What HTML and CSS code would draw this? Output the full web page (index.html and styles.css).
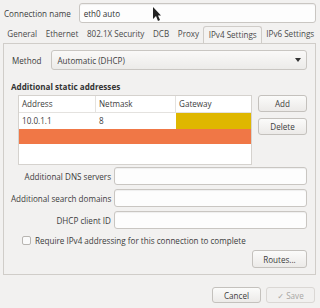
FILE: index.html
```html
<!DOCTYPE html>
<html>
<head>
<meta charset="utf-8">
<link rel="stylesheet" href="styles.css">
</head>
<body>
<div class="win">
  <div class="toprow">
    <span class="lbl">Connection name</span>
    <div class="entry name">eth0 auto<span class="cursor"><svg width="9" height="14" viewBox="0 0 9 14"><path d="M1 0 L1 12 L4 9 L6 14 L8 13 L6 8.5 L9 8.5 Z" fill="#222"/></svg></span></div>
  </div>
  <div class="tabs">
    <span class="tab">General</span>
    <span class="tab">Ethernet</span>
    <span class="tab">802.1X Security</span>
    <span class="tab">DCB</span>
    <span class="tab">Proxy</span>
    <span class="tab active">IPv4 Settings</span>
    <span class="tab">IPv6 Settings</span>
  </div>
  <div class="panel">
    <div class="method">
      <span class="lbl">Method</span>
      <div class="combo"><span>Automatic (DHCP)</span><span class="arrow"></span></div>
    </div>
    <div class="section">Additional static addresses</div>
    <div class="addr">
      <div class="table">
        <div class="trow head"><div class="c c1">Address</div><div class="c c2">Netmask</div><div class="c c3">Gateway</div></div>
        <div class="trow"><div class="c c1">10.0.1.1</div><div class="c c2">8</div><div class="c c3 yellow"></div></div>
        <div class="trow orange"></div>
      </div>
      <div class="sidebtns">
        <div class="btn">Add</div>
        <div class="btn">Delete</div>
      </div>
    </div>
    <div class="form">
      <span class="flbl">Additional DNS servers</span><div class="entry"></div>
      <span class="flbl">Additional search domains</span><div class="entry"></div>
      <span class="flbl">DHCP client ID</span><div class="entry"></div>
    </div>
    <div class="check"><span class="box"></span><span>Require IPv4 addressing for this connection to complete</span></div>
    <div class="routes"><div class="btn wide">Routes...</div></div>
  </div>
  <div class="bottom">
    <div class="btn cancel">Cancel</div>
    <div class="btn save">✓ Save</div>
  </div>
</div>
</body>
</html>
```
FILE: styles.css
```css
html, body {
  margin: 0;
  padding: 0;
}
body {
  background: #f2f1f0;
  font-family: "Open Sans", "DejaVu Sans", sans-serif;
  font-size: 8.1px;
  color: #3c3c3c;
  width: 320px;
  height: 308px;
  overflow: hidden;
}
.win {
  padding: 3px 4px 0 3px;
}
.toprow {
  display: flex;
  align-items: center;
  gap: 8px;
  height: 20px;
}
.lbl {
  padding-left: 1px;
}
.entry {
  background: #fdfdfd;
  border: 1px solid #c9c6c2;
  border-radius: 3px;
  box-shadow: inset 0 1px 1px rgba(0,0,0,0.06);
  height: 17px;
  box-sizing: border-box;
  display: flex;
  align-items: center;
  padding-left: 4px;
  color: #333;
}
.entry.name {
  flex: 1;
  height: 20px;
  position: relative;
}
.cursor {
  position: absolute;
  left: 72px;
  top: 3px;
  display: block;
  line-height: 0;
}
.tabs {
  display: flex;
  margin-top: 3px;
  height: 17px;
  align-items: flex-end;
  padding-left: 0;
}
.tab {
  padding: 0 4.3px;
  height: 17px;
  line-height: 16px;
  box-sizing: border-box;
  color: #4a4a4a;
  white-space: nowrap;
}
.tab.active {
  border: 1px solid #cfccc8;
  border-bottom: none;
  border-radius: 3px 3px 0 0;
  background: #f4f3f2;
}
.panel {
  border: 1px solid #d0cdc9;
  height: 232px;
  box-sizing: border-box;
  padding: 6px 8px 0 7px;
}
.method {
  display: flex;
  align-items: center;
  gap: 9px;
}
.combo {
  flex: 1;
  height: 20px;
  box-sizing: border-box;
  border: 1px solid #c9c6c2;
  border-radius: 3px;
  background: linear-gradient(#faf9f8, #ecebe9);
  display: flex;
  align-items: center;
  justify-content: space-between;
  padding: 0 5px 0 6px;
}
.arrow {
  width: 0;
  height: 0;
  border-left: 3px solid transparent;
  border-right: 3px solid transparent;
  border-top: 4px solid #333;
}
.section {
  font-weight: bold;
  margin-top: 11px;
  color: #333;
}
.addr {
  display: flex;
  margin-top: 3px;
  padding-left: 7px;
  gap: 6px;
}
.table {
  width: 235px;
  height: 70px;
  background: #fff;
  border: 1px solid #d5d2ce;
  box-sizing: border-box;
}
.trow {
  display: flex;
  height: 16px;
}
.trow.head {
  border-bottom: 1px solid #e4e2df;
}
.c {
  line-height: 16px;
  padding-left: 3px;
  box-sizing: border-box;
}
.c1 { width: 77px; }
.c2 { width: 80px; }
.c3 { flex: 1; }
.head .c1, .head .c2 { border-right: 1px solid #e4e2df; }
.yellow { background: #dfb700; }
.trow.orange {
  background: #f07746;
  height: 15px;
}
.sidebtns {
  display: flex;
  flex-direction: column;
  gap: 6px;
}
.btn {
  height: 17px;
  box-sizing: border-box;
  border: 1px solid #c4c1bd;
  border-radius: 3px;
  background: linear-gradient(#fbfbfa, #eceae8);
  display: flex;
  align-items: center;
  justify-content: center;
  width: 49px;
  color: #3c3c3c;
}
.form {
  display: grid;
  grid-template-columns: 100px 1fr;
  column-gap: 3px;
  row-gap: 4px;
  margin-top: 2px;
  align-items: center;
}
.flbl {
  text-align: right;
  white-space: nowrap;
}
.form .entry {
  height: 18px;
}
.check {
  display: flex;
  align-items: center;
  gap: 4px;
  margin-top: 6px;
  padding-left: 11px;
}
.box {
  width: 7px;
  height: 7px;
  border: 1px solid #b8b5b1;
  border-radius: 2px;
  background: #fafafa;
}
.routes {
  display: flex;
  justify-content: flex-end;
  margin-top: 4px;
}
.btn.wide {
  width: 55px;
  height: 18px;
}
.bottom {
  display: flex;
  justify-content: flex-end;
  gap: 5px;
  margin-top: 12px;
  padding-right: 1px;
}
.bottom .btn {
  height: 16px;
}
.save {
  color: #a8a6a3;
  background: #f1f0ef;
  border-color: #dad7d4;
}
```
